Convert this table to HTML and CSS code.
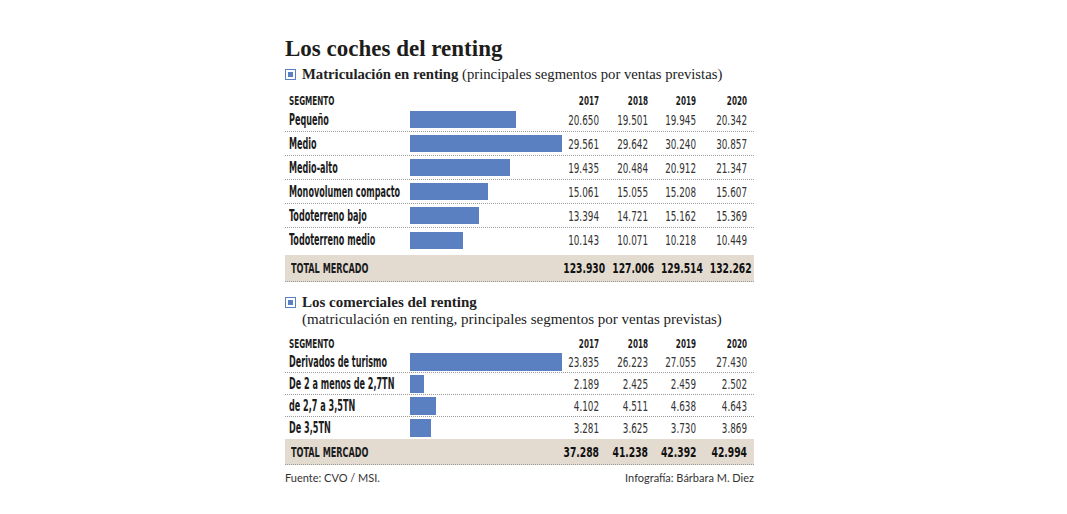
FILE: index.html
```html
<!DOCTYPE html>
<html>
<head>
    <title>Los coches del renting</title>
    <link rel="stylesheet" href="styles.css">
</head>
<body>
    <div class="infographic">
        <h1 class="title">Los coches del renting</h1>
        <h2 class="section-title">
            <span class="marker"></span>
            <span><b>Matriculación en renting</b> (principales segmentos por ventas previstas)</span>
        </h2>
        <div class="data-table">
            <div class="row head">
                <span class="label">SEGMENTO</span><span></span>
                <span class="num">2017</span><span class="num">2018</span><span class="num">2019</span><span class="num">2020</span>
            </div>
            <div class="row">
                <span class="label">Pequeño</span><span class="bar-cell"><span class="bar" style="width:106px"></span></span>
                <span class="num">20.650</span><span class="num">19.501</span><span class="num">19.945</span><span class="num">20.342</span>
            </div>
            <div class="row">
                <span class="label">Medio</span><span class="bar-cell"><span class="bar" style="width:152px"></span></span>
                <span class="num">29.561</span><span class="num">29.642</span><span class="num">30.240</span><span class="num">30.857</span>
            </div>
            <div class="row">
                <span class="label">Medio-alto</span><span class="bar-cell"><span class="bar" style="width:100px"></span></span>
                <span class="num">19.435</span><span class="num">20.484</span><span class="num">20.912</span><span class="num">21.347</span>
            </div>
            <div class="row">
                <span class="label">Monovolumen compacto</span><span class="bar-cell"><span class="bar" style="width:78px"></span></span>
                <span class="num">15.061</span><span class="num">15.055</span><span class="num">15.208</span><span class="num">15.607</span>
            </div>
            <div class="row">
                <span class="label">Todoterreno bajo</span><span class="bar-cell"><span class="bar" style="width:69px"></span></span>
                <span class="num">13.394</span><span class="num">14.721</span><span class="num">15.162</span><span class="num">15.369</span>
            </div>
            <div class="row last">
                <span class="label">Todoterreno medio</span><span class="bar-cell"><span class="bar" style="width:53px"></span></span>
                <span class="num">10.143</span><span class="num">10.071</span><span class="num">10.218</span><span class="num">10.449</span>
            </div>
            <div class="row total">
                <span class="label">TOTAL MERCADO</span><span></span>
                <span class="num">123.930</span><span class="num">127.006</span><span class="num">129.514</span><span class="num">132.262</span>
            </div>
        </div>

        <h2 class="section-title second">
            <span class="marker"></span>
            <span><b>Los comerciales del renting</b><br>(matriculación en renting, principales segmentos por ventas previstas)</span>
        </h2>
        <div class="data-table compact">
            <div class="row head">
                <span class="label">SEGMENTO</span><span></span>
                <span class="num">2017</span><span class="num">2018</span><span class="num">2019</span><span class="num">2020</span>
            </div>
            <div class="row">
                <span class="label">Derivados de turismo</span><span class="bar-cell"><span class="bar" style="width:152px"></span></span>
                <span class="num">23.835</span><span class="num">26.223</span><span class="num">27.055</span><span class="num">27.430</span>
            </div>
            <div class="row">
                <span class="label">De 2 a menos de 2,7TN</span><span class="bar-cell"><span class="bar" style="width:14px"></span></span>
                <span class="num">2.189</span><span class="num">2.425</span><span class="num">2.459</span><span class="num">2.502</span>
            </div>
            <div class="row">
                <span class="label">de 2,7 a 3,5TN</span><span class="bar-cell"><span class="bar" style="width:26px"></span></span>
                <span class="num">4.102</span><span class="num">4.511</span><span class="num">4.638</span><span class="num">4.643</span>
            </div>
            <div class="row last">
                <span class="label">De 3,5TN</span><span class="bar-cell"><span class="bar" style="width:21px"></span></span>
                <span class="num">3.281</span><span class="num">3.625</span><span class="num">3.730</span><span class="num">3.869</span>
            </div>
            <div class="row total">
                <span class="label">TOTAL MERCADO</span><span></span>
                <span class="num">37.288</span><span class="num">41.238</span><span class="num">42.392</span><span class="num">42.994</span>
            </div>
        </div>

        <div class="credits">
            <span>Fuente: CVO / MSI.</span>
            <span>Infografía: Bárbara M. Diez</span>
        </div>
    </div>
</body>
</html>
```

FILE: styles.css
```css
body {
    margin: 0;
    background: #fff;
    color: #1c1c1c;
}
.infographic {
    width: 469px;
    margin-left: 285px;
    padding-top: 35px;
}
.title {
    margin: 0;
    font: bold 23px/28px "Liberation Serif", serif;
    color: #1d1d1b;
}
.section-title {
    display: flex;
    margin: 3px 0 0;
    font: normal 14.7px/17px "Liberation Serif", serif;
    color: #222;
}
.section-title b {
    font-weight: bold;
}
.section-title.second {
    margin-top: 12px;
    font-size: 15px;
}
.marker {
    flex: none;
    width: 9px;
    height: 9px;
    margin: 3px 6px 0 0;
    border: 1px solid #5b80c2;
    background: #5b80c2;
    box-shadow: inset 0 0 0 2px #fff;
}
.data-table {
    margin-top: 11px;
}
.data-table.compact {
    margin-top: 8px;
}
.row {
    display: grid;
    grid-template-columns: 121px 140px 49px 49px 48px 51px;
    align-items: center;
    height: 24px;
    padding: 0 7px 0 4px;
    box-sizing: border-box;
    border-bottom: 1px dotted #9a9a9a;
}
.compact .row {
    height: 22px;
}
.row.last,
.row.head {
    border-bottom: none;
}
.row.head {
    height: 14px;
}
.compact .row.head {
    height: 15px;
}
/* condensed look: the narrow face is not installed, so squeeze DejaVu Condensed */
.label {
    font: bold 15px/18px "DejaVu Sans Condensed", "DejaVu Sans", sans-serif;
    white-space: nowrap;
    transform: scaleX(0.6);
    transform-origin: left center;
}
.num {
    font: normal 14px/18px "DejaVu Sans Condensed", "DejaVu Sans", sans-serif;
    color: #333;
    text-align: right;
    white-space: nowrap;
    transform: scaleX(0.7);
    transform-origin: right center;
}
.head .label {
    font-size: 12px;
    line-height: 14px;
    transform: scaleX(0.67);
}
.head .num {
    font-weight: bold;
    font-size: 12px;
    line-height: 14px;
    color: #1c1c1c;
    transform: scaleX(0.67);
}
.bar-cell {
    height: 17px;
}
.bar {
    display: block;
    height: 17px;
    background: #5b80c2;
}
.compact .bar-cell,
.compact .bar {
    height: 18px;
}
.row.total {
    height: 27px;
    margin-top: 3px;
    background: #e3dbd0;
}
.compact .row.total {
    height: 26px;
    margin-top: 0;
}
.total .label {
    font-size: 13.5px;
    margin-left: 2px;
    transform: scaleX(0.67);
}
.total .num {
    font-weight: bold;
    color: #111;
    transform: scaleX(0.73);
}
.credits {
    display: flex;
    justify-content: space-between;
    margin-top: 6px;
    font: 11px/14px Lato, sans-serif;
    color: #333;
}
```
